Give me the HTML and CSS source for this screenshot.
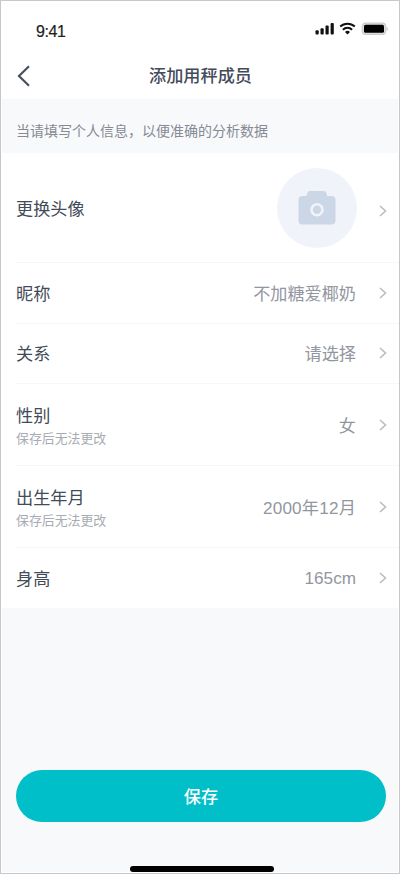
FILE: index.html
```html
<!DOCTYPE html>
<html lang="zh-CN">
<head>
<meta charset="utf-8">
<title>添加用秤成员</title>
<link rel="stylesheet" href="styles.css">
</head>
<body>
<div class="screen">
  <div class="status">
    <span class="time">9:41</span>
    <svg class="indicators" width="74" height="14" viewBox="0 0 74 14">
      <g fill="#111">
        <rect x="1.5" y="8.3" width="3.2" height="4.2" rx="1"/>
        <rect x="6.5" y="6.2" width="3.2" height="6.3" rx="1"/>
        <rect x="11.5" y="3.6" width="3.2" height="8.9" rx="1"/>
        <rect x="16.6" y="1" width="3.2" height="11.5" rx="1"/>
        <path d="M33.5 12.5l-2.5-2.6a3.6 3.6 0 0 1 5 0z"/>
      </g>
      <g fill="none" stroke="#111" stroke-width="2">
        <path d="M26.2 4.6a10.6 10.6 0 0 1 14.6 0"/>
        <path d="M28.9 7.7a6.6 6.6 0 0 1 9.2 0"/>
      </g>
      <rect x="48.2" y="1.1" width="23.5" height="11.4" rx="3.4" fill="#ddd" stroke="#ccc" stroke-width="1.1"/>
      <path d="M72.6 5v4c1.5-.5 1.5-3.5 0-4z" fill="#bbb"/>
      <rect x="50" y="2.8" width="20" height="8" rx="1.6"/>
    </svg>
  </div>
  <header class="nav">
    <svg class="back" width="14" height="22" viewBox="0 0 14 22"><path d="M12 1.3L2 11l10 9.7"/></svg>
    <h1>添加用秤成员</h1>
  </header>
  <p class="notice">当请填写个人信息，以便准确的分析数据</p>
  <main class="list">
    <div class="row avatar-row">
      <span class="label">更换头像</span>
      <span class="avatar">
        <svg width="38" height="36" viewBox="0 0 38 36">
          <path d="M11.5 1h14q2.500 0 3 2.500l.6 2.500h4.400q4 0 4 4v20.500q0 4-4 4H4.500q-4 0-4-4V10q0-4 4-4h4l.6-2.500q.5-2.500 2.400-2.500z" fill="#cbd6e6"/>
          <circle cx="19" cy="19.700" r="5.500" fill="none" stroke="#f0f4fa" stroke-width="2.600"/>
        </svg>
      </span>
      <svg class="chevron" width="8" height="12" viewBox="0 0 8 12"><path d="M1 1l5.500 5L1 11"/></svg>
    </div>
    <div class="row">
      <span class="label">昵称</span><span class="value">不加糖爱椰奶</span>
      <svg class="chevron" width="8" height="12" viewBox="0 0 8 12"><path d="M1 1l5.500 5L1 11"/></svg>
    </div>
    <div class="row">
      <span class="label">关系</span><span class="value">请选择</span>
      <svg class="chevron" width="8" height="12" viewBox="0 0 8 12"><path d="M1 1l5.500 5L1 11"/></svg>
    </div>
    <div class="row tall">
      <span class="label">性别<small>保存后无法更改</small></span><span class="value">女</span>
      <svg class="chevron" width="8" height="12" viewBox="0 0 8 12"><path d="M1 1l5.500 5L1 11"/></svg>
    </div>
    <div class="row tall">
      <span class="label">出生年月<small>保存后无法更改</small></span><span class="value date">2000年12月</span>
      <svg class="chevron" width="8" height="12" viewBox="0 0 8 12"><path d="M1 1l5.500 5L1 11"/></svg>
    </div>
    <div class="row">
      <span class="label">身高</span><span class="value height">165cm</span>
      <svg class="chevron" width="8" height="12" viewBox="0 0 8 12"><path d="M1 1l5.500 5L1 11"/></svg>
    </div>
  </main>
  <footer class="footer">
    <button class="save">保存</button>
    <div class="home-bar"></div>
  </footer>
</div>
</body>
</html>
```
FILE: styles.css
```css
* { box-sizing: border-box; }
body {
  margin: 0;
  font-family: "Liberation Sans", "Noto Sans CJK SC", sans-serif;
  color: #434b59;
}
.screen {
  width: 400px;
  height: 874px;
  display: flex;
  flex-direction: column;
  border: 1px solid #c8c8c8;
  background: #f8f9fb;
  box-shadow: inset 1px 1px #fff, inset -1px -1px #fff;
}
.status {
  height: 51px;
  display: flex;
  justify-content: space-between;
  padding: 21px 11px 0 35px;
  background: #fff;
}
.time { font-size: 16px; line-height: 20px; color: #222; letter-spacing: -.4px; -webkit-text-stroke: .2px #222; }
.indicators { display: block; }
.nav {
  height: 47px;
  display: grid;
  grid-template-columns: 40px 1fr 40px;
  align-items: center;
  background: #fff;
}
.back { margin-left: 16px; fill: none; stroke: #46505e; stroke-width: 2.2; }
.nav h1 {
  margin: 0;
  padding-left: 1px;
  text-align: center;
  font-size: 17.15px;
  line-height: 24px;
  font-weight: 500;
}
.notice {
  margin: 0;
  height: 54px;
  padding: 5px 15px 0;
  font-size: 14px;
  line-height: 54px;
  color: #858a94;
}
.list { background: #fff; }
.row {
  height: 60.5px;
  display: flex;
  align-items: center;
  margin-left: 15px;
  padding-right: 12px;
  border-bottom: 1px solid #f7f7f8;
}
.row:last-child { border-bottom: 0; height: 60px; }
.avatar-row { height: 110px; }
.avatar-row .chevron { margin-top: 7px; margin-left: 22px; }
.tall { height: 82px; }
.label { flex: 1; padding-top: 2px; font-size: 17.15px; line-height: 24px; }
.tall .label { padding-top: 3px; }
.label small { display: block; font-size: 12.9px; line-height: 20px; margin-top: 1px; color: #a7abb3; }
.value { padding-top: 2px; font-size: 17.15px; line-height: 24px; color: #92969f; }
.date { letter-spacing: .2px; }
.height { padding-top: 0; }
.avatar {
  width: 80px;
  height: 80px;
  display: flex;
  align-items: center;
  justify-content: center;
  border-radius: 50%;
  background: #f0f4fa;
}
.chevron { margin-left: 23px; fill: none; stroke: #b9bcc2; stroke-width: 1.6; }
.footer {
  flex: 1;
  display: flex;
  flex-direction: column;
  justify-content: flex-end;
  align-items: center;
  padding-bottom: 1px;
}
.save {
  width: 370px;
  height: 52px;
  margin-left: 2px;
  border: 0;
  border-radius: 26px;
  background: #00bfc9;
  color: #fff;
  font: 500 17.15px/24px "Noto Sans CJK SC", sans-serif;
}
.home-bar { width: 144px; height: 6px; margin: 44px 0 0 4px; border-radius: 3px; background: #000; }
```
